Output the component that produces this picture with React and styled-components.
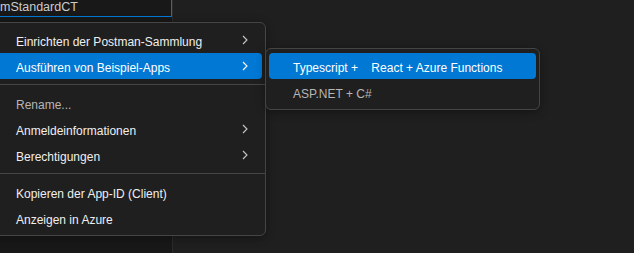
import React from "react";
import styled, { createGlobalStyle } from "styled-components";

const GlobalStyle = createGlobalStyle`
  html, body {
    margin: 0;
    padding: 0;
    background: #1f1f1f;
    overflow: hidden;
  }
  body {
    font-family: "Liberation Sans", Arial, sans-serif;
    font-size: 12px;
  }
`;

const Window = styled.div`
  position: relative;
  width: 634px;
  height: 253px;
  display: flex;
  background: #1f1f1f;
  overflow: hidden;
`;

const Sidebar = styled.div`
  width: 172px;
  height: 100%;
  background: #181818;
  border-right: 1px solid #2b2b2b;
  display: flex;
  flex-direction: column;
`;

const TreeRow = styled.div`
  box-sizing: border-box;
  height: 17px;
  width: 172px;
  display: flex;
  align-items: center;
  font-size: 12.5px;
  color: #cccccc;
  white-space: nowrap;
  overflow: hidden;
  border-right: 1px solid ${(p) => (p.$focused ? "#0078d4" : "transparent")};
  border-bottom: 1px solid ${(p) => (p.$focused ? "#0078d4" : "transparent")};
  padding-bottom: 2px;
`;

const Main = styled.div`
  flex: 1;
  background: #1f1f1f;
`;

const Menu = styled.div`
  position: absolute;
  top: ${(p) => p.$top}px;
  left: ${(p) => p.$left}px;
  width: ${(p) => p.$width}px;
  box-sizing: border-box;
  padding: 4px 0;
  background: #1f1f1f;
  border: 1px solid #454545;
  border-radius: 6px;
  box-shadow: 0 2px 8px rgba(0, 0, 0, 0.36);
  display: flex;
  flex-direction: column;
`;

const Item = styled.div`
  height: 26px;
  margin: 0 3px;
  padding: 0 14px 0 24px;
  border-radius: 4px;
  display: flex;
  align-items: center;
  justify-content: space-between;
  white-space: pre;
  background: ${(p) => (p.$active ? "#0078d4" : "transparent")};
  color: ${(p) => (p.$active ? "#ffffff" : p.$dim ? "#b6b6b6" : "#efefef")};
`;

const Label = styled.span`
  padding-top: 4px;
`;

const Separator = styled.div`
  height: 0;
  margin: 5px 0;
  border-bottom: 1px solid #454545;
`;

const Chevron = ({ color }) => (
  <svg width="6" height="10" viewBox="0 0 6 10">
    <polyline
      points="1,1 5,5 1,9"
      fill="none"
      stroke={color}
      strokeWidth="1.1"
      strokeLinejoin="miter"
    />
  </svg>
);

const MenuItem = ({ label, submenu, active, dim }) => (
  <Item $active={active} $dim={dim}>
    <Label>{label}</Label>
    {submenu && <Chevron color={active ? "#ffffff" : "#c8c8c8"} />}
  </Item>
);

export default function App() {
  return (
    <>
      <GlobalStyle />
      <Window>
        <Sidebar>
          <TreeRow $focused>mStandardCT</TreeRow>
        </Sidebar>
        <Main />

        <Menu $top={22} $left={-12} $width={278}>
          <MenuItem label="Einrichten der Postman-Sammlung" submenu />
          <MenuItem label="Ausführen von Beispiel-Apps" submenu active />
          <Separator />
          <MenuItem label="Rename..." dim />
          <MenuItem label="Anmeldeinformationen" submenu />
          <MenuItem label="Berechtigungen" submenu />
          <Separator />
          <MenuItem label="Kopieren der App-ID (Client)" />
          <MenuItem label="Anzeigen in Azure" />
        </Menu>

        <Menu $top={48} $left={265} $width={275}>
          <MenuItem label="Typescript +    React + Azure Functions" active />
          <MenuItem label="ASP.NET + C#" dim />
        </Menu>
      </Window>
    </>
  );
}
